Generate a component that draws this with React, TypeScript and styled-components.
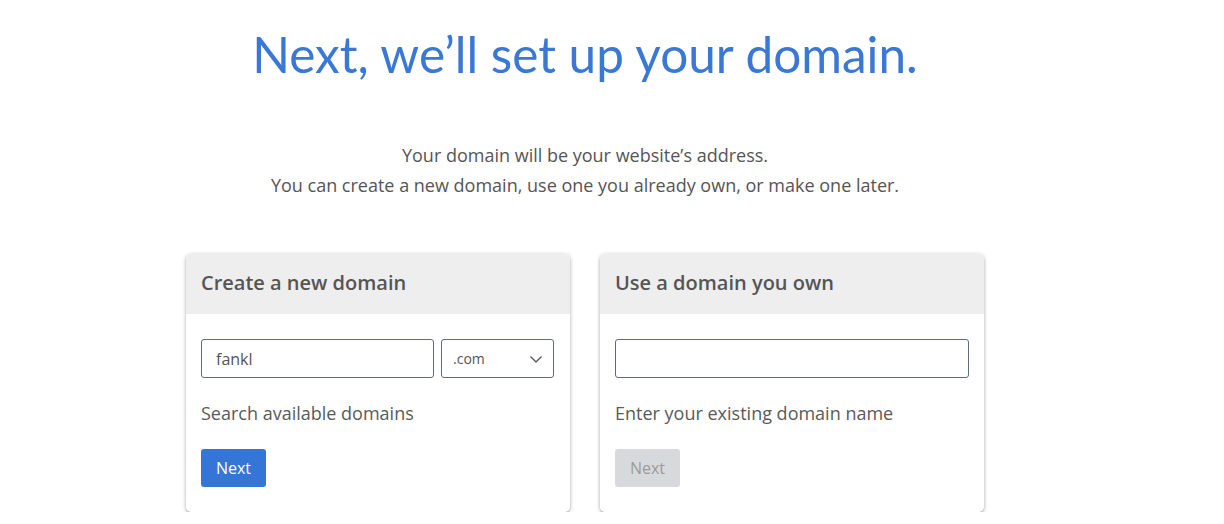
import React from "react";
import styled, { createGlobalStyle } from "styled-components";

const GlobalStyle = createGlobalStyle`
  html, body {
    margin: 0;
    padding: 0;
    background: #ffffff;
  }
  * {
    box-sizing: border-box;
  }
`;

const Page = styled.div`
  width: 1170px;
  padding-top: 22px;
  display: flex;
  flex-direction: column;
  align-items: center;
  font-family: "Open Sans", "Liberation Sans", sans-serif;
`;

const Headline = styled.h1`
  margin: 0;
  font-family: "Lato", "Open Sans", sans-serif;
  font-weight: 400;
  font-size: 49.5px;
  line-height: 64px;
  color: #3a78d6;
`;

const Lead = styled.p`
  margin: 54px 0 0;
  text-align: center;
  font-size: 18px;
  line-height: 30px;
  color: #555555;
`;

const Cards = styled.div`
  margin-top: 54px;
  display: flex;
  gap: 30px;
`;

const Card = styled.section`
  width: 384px;
  background: #ffffff;
  border-radius: 5px;
  box-shadow: 0 1px 4px rgba(0, 0, 0, 0.28), 0 2px 2px rgba(0, 0, 0, 0.12);
  overflow: hidden;
`;

const CardHeader = styled.div`
  height: 60px;
  display: flex;
  align-items: center;
  padding: 0 15px 3px;
  background: #eeeeee;
`;

const CardTitle = styled.h2`
  margin: 0;
  font-size: 20px;
  font-weight: 600;
  color: #555555;
`;

const CardBody = styled.div`
  padding: 25px 15px 25px;
`;

const FieldRow = styled.div`
  display: flex;
  gap: 7px;
`;

const TextInput = styled.input<{ $width?: string }>`
  width: ${(p) => p.$width || "100%"};
  height: 39px;
  border: 1px solid #5f6b7f;
  border-radius: 3px;
  padding: 0 14px;
  font-family: "Open Sans", sans-serif;
  font-size: 16px;
  color: #555555;
  outline: none;
`;

const SelectBox = styled.div`
  width: 113px;
  height: 39px;
  border: 1px solid #5f6b7f;
  border-radius: 3px;
  padding: 0 10px 0 11px;
  display: flex;
  align-items: center;
  justify-content: space-between;
  font-size: 14px;
  color: #555555;
`;

const Hint = styled.p`
  margin: 23px 0 0;
  font-size: 18px;
  line-height: 24px;
  color: #5a5a5a;
`;

const Button = styled.button<{ $disabled?: boolean }>`
  display: block;
  margin-top: 24px;
  width: 65px;
  height: 38px;
  border: none;
  border-radius: 3px;
  font-family: "Open Sans", sans-serif;
  font-size: 16px;
  background: ${(p) => (p.$disabled ? "#d7dadd" : "#3575d6")};
  color: ${(p) => (p.$disabled ? "#9a9a9a" : "#ffffff")};
  cursor: ${(p) => (p.$disabled ? "default" : "pointer")};
`;

const Chevron = () => (
  <svg width="14" height="14" viewBox="0 0 14 14" fill="none">
    <path d="M1.5 4.5 L7 10 L12.5 4.5" stroke="#555" strokeWidth="1.3" />
  </svg>
);

export default function App() {
  return (
    <>
      <GlobalStyle />
      <Page>
        <Headline>Next, we’ll set up your domain.</Headline>
        <Lead>
          Your domain will be your website’s address.
          <br />
          You can create a new domain, use one you already own, or make one later.
        </Lead>
        <Cards>
          <Card>
            <CardHeader>
              <CardTitle>Create a new domain</CardTitle>
            </CardHeader>
            <CardBody>
              <FieldRow>
                <TextInput $width="233px" defaultValue="fankl" />
                <SelectBox>
                  <span>.com</span>
                  <Chevron />
                </SelectBox>
              </FieldRow>
              <Hint>Search available domains</Hint>
              <Button>Next</Button>
            </CardBody>
          </Card>
          <Card>
            <CardHeader>
              <CardTitle>Use a domain you own</CardTitle>
            </CardHeader>
            <CardBody>
              <TextInput />
              <Hint>Enter your existing domain name</Hint>
              <Button $disabled>Next</Button>
            </CardBody>
          </Card>
        </Cards>
      </Page>
    </>
  );
}
